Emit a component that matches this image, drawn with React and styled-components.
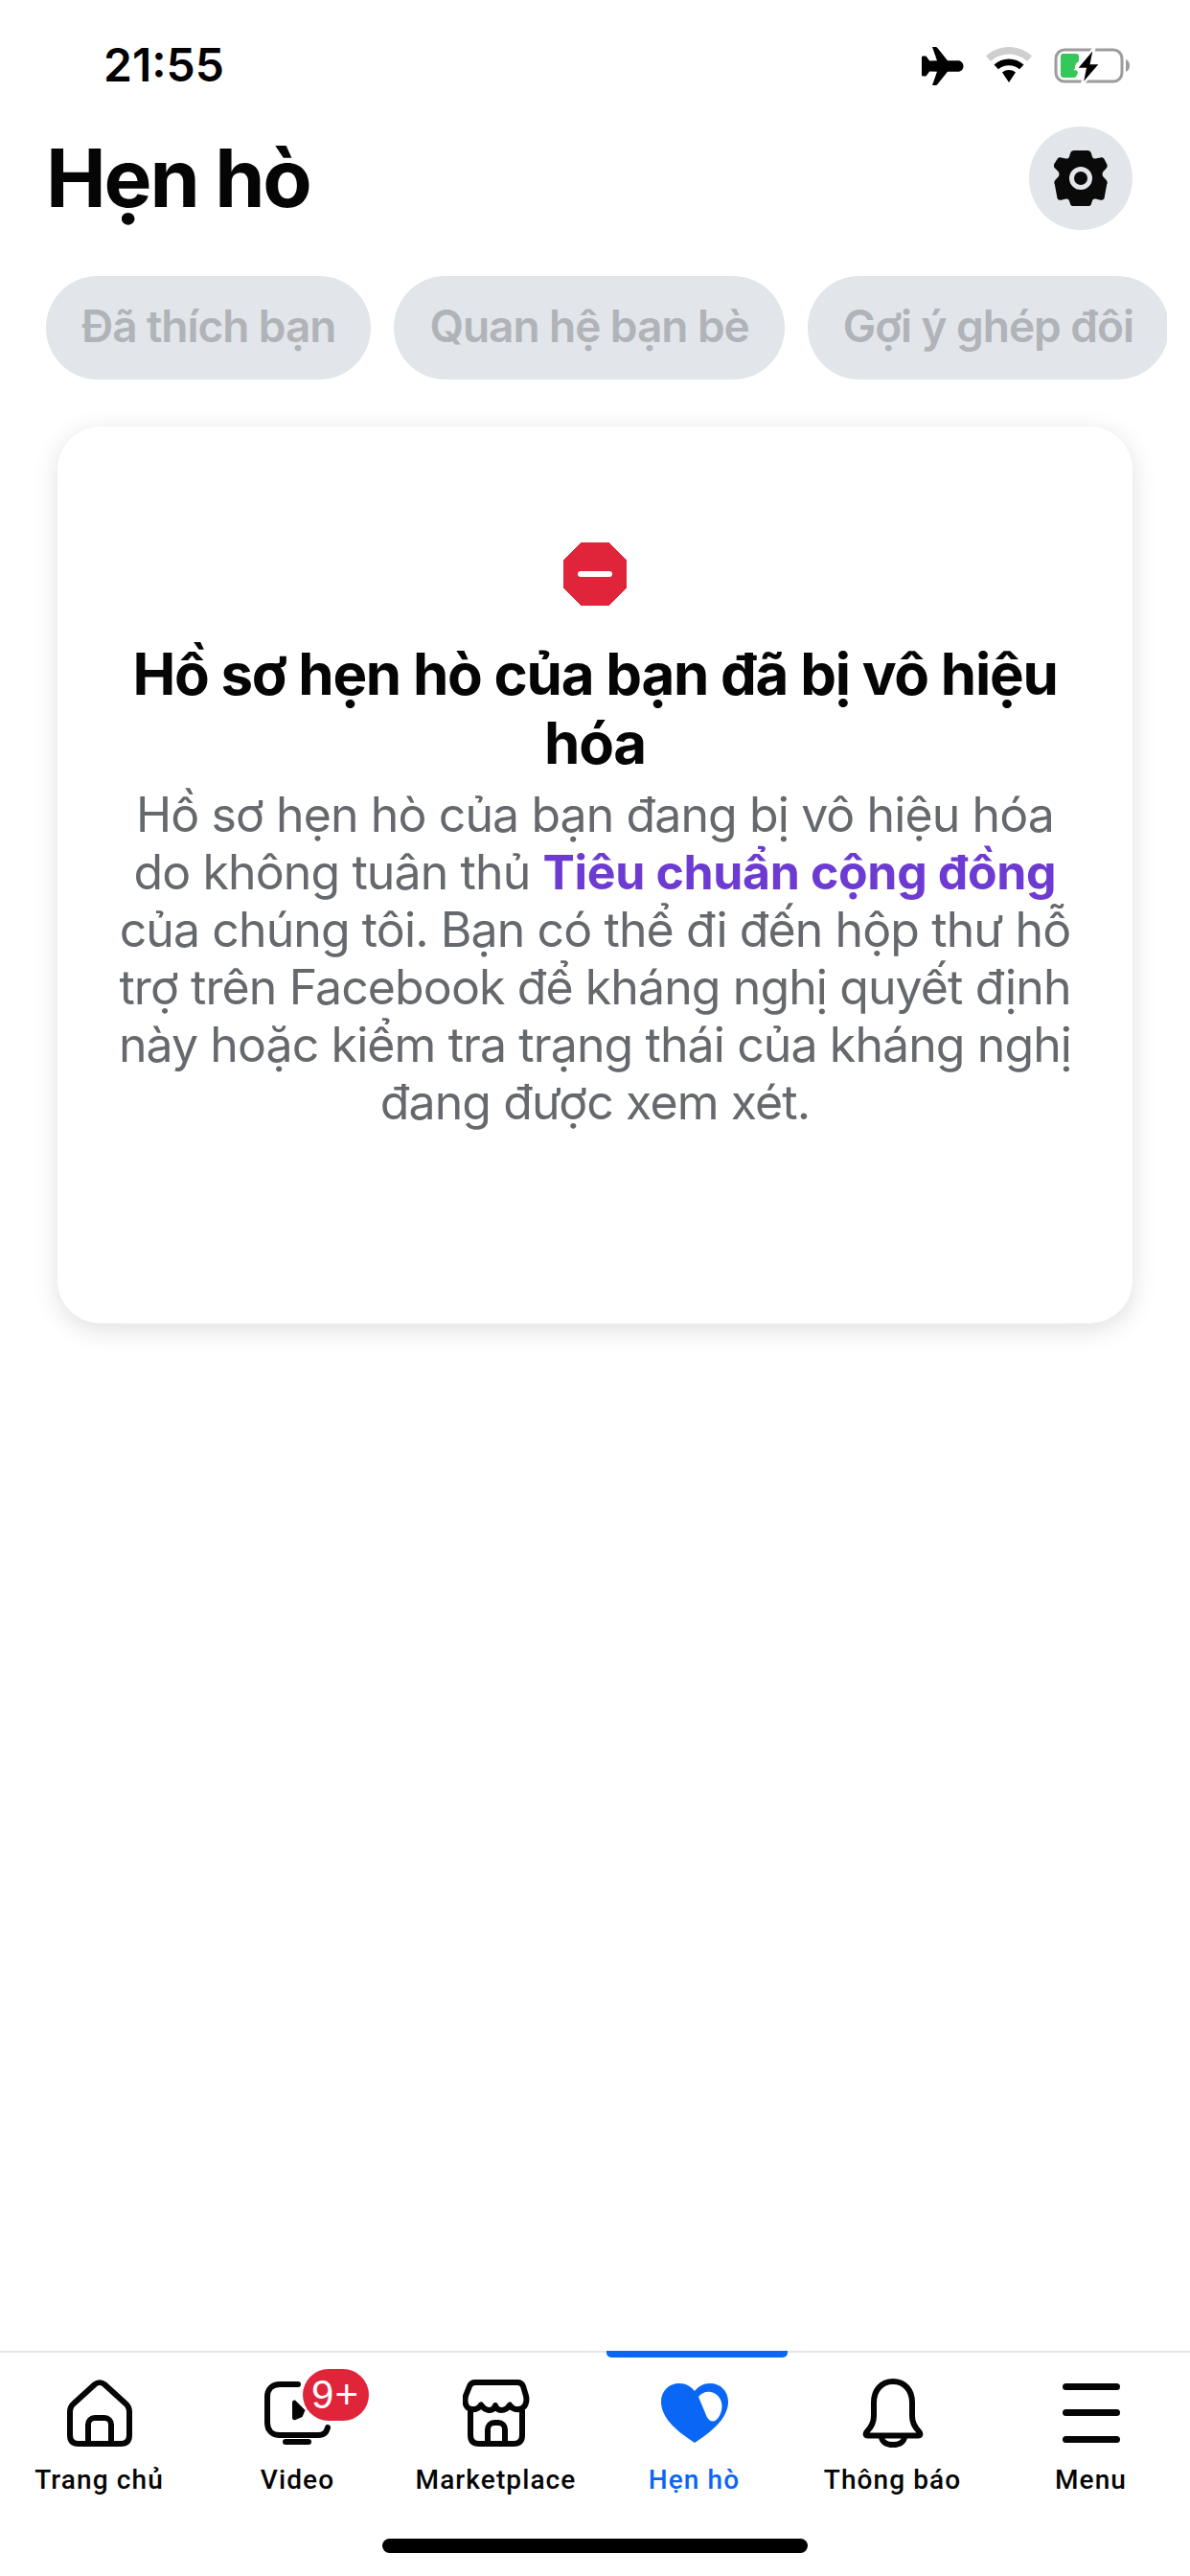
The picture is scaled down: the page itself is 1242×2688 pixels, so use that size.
import React from "react";
import styled, { createGlobalStyle } from "styled-components";

const Global = createGlobalStyle`
  html, body { margin: 0; padding: 0; background: #fff; }
  * { box-sizing: border-box; }
`;
const Page = styled.div`
  width: 1242px; height: 2688px; display: flex; flex-direction: column; background: #fff;
  font-family: Inter, "Liberation Sans", sans-serif; color: #050505; overflow: hidden;
`;
const StatusBar = styled.div`
  height: 132px; flex: none; display: flex; align-items: flex-start; justify-content: space-between;
  padding: 44px 62px 0 108px;
`;
const Clock = styled.div`
  font-size: 48px; font-weight: 600; line-height: 48px; letter-spacing: 0; color: #000;
`;
const StatusIcons = styled.div`
  display: flex; align-items: flex-start; gap: 23px; padding-top: 5px;
`;
const Header = styled.div`
  flex: none; display: flex; align-items: center; justify-content: space-between;
  height: 108px; padding: 0 60px 0 48px;
`;
const Title = styled.h1`
  margin: 0; font-size: 84px; line-height: 108px; font-weight: 700; letter-spacing: -2.2px; color: #050505;
`;
const RoundButton = styled.div`
  width: 108px; height: 108px; border-radius: 50%; background: #e2e5e9;
  display: flex; align-items: center; justify-content: center;
`;
const Chips = styled.div`
  flex: none; display: flex; gap: 24px; margin: 48px 24px 0 48px; height: 108px; overflow: hidden;
`;
const Chip = styled.div`
  flex: none; height: 108px; border-radius: 54px; background: #e2e5e9; color: #b0b3b8;
  padding: 0 37px 4px; display: flex; align-items: center; font-size: 46px; font-weight: 600; letter-spacing: -1.05px; white-space: nowrap;
`;
const Card = styled.div`
  flex: none; margin: 49px 60px 0; height: 936px; border-radius: 45px; background: #fff;
  box-shadow: 0 6px 27px rgba(0,0,0,0.13);
  display: flex; flex-direction: column; align-items: center; padding-top: 121px; text-align: center;
`;
const Heading = styled.h2`
  margin: 35px 0 0; font-size: 60px; line-height: 72px; font-weight: 700; letter-spacing: -1.25px; color: #050505;
`;
const Body = styled.p`
  margin: 9px 0 0; font-size: 50px; line-height: 60px; font-weight: 400; color: #65686c; letter-spacing: -0.9px;
`;
const Link = styled.span`
  color: #6d3bd1; font-weight: 700; letter-spacing: -0.35px;
`;
const Spacer = styled.div`flex: 1;`;
const TabBar = styled.div`
  flex: none; height: 235px; border-top: 2px solid #e6e7e9; display: grid; grid-template-columns: repeat(6, 207px);
  align-items: start; background: #fff; position: relative;
`;
const Tab = styled.div`
  position: relative; display: flex; flex-direction: column; align-items: center; padding-top: 26px;
  color: ${p => p.$active ? "#0a66f5" : "#050505"};
`;
const TabIcon = styled.div`
  flex: none; position: relative; width: 80px; height: 74px; display: flex; align-items: center; justify-content: center;
`;
const TabLabel = styled.div`
  flex: none; margin-top: 16px; font-family: Roboto, Inter, sans-serif; font-size: 28px; line-height: 34px; font-weight: 500; letter-spacing: 1.1px; white-space: nowrap;
`;
const Indicator = styled.div`
  position: absolute; top: -2px; left: 12px; width: 189px; height: 7px; background: #0a66f5; border-radius: 0 0 5px 5px;
`;
const Badge = styled.div`
  position: absolute; left: 45px; top: -9px; width: 69px; height: 54px; border-radius: 27px; background: #e0243a; color: #fff;
  font-family: "Liberation Sans", sans-serif; font-size: 42px; line-height: 54px; text-align: center; letter-spacing: 1px;
`;
const HomeBar = styled.div`
  position: absolute; left: 399px; top: 194px; width: 444px; height: 15px; border-radius: 8px; background: #000;
`;

const Plane = () => (
  <svg width="44" height="40" viewBox="0 0 44 40">
    <path fill="#000" d="M11 0h3.500c.8 0 1.400.4 1.900 1L27 14.200h11c3 0 5.500 2.500 5.500 5.800s-2.500 5.800-5.500 5.800H27L16.400 39c-.5.600-1.100 1-1.900 1H11l5-14.200-7.800-.3L4.500 30.500H1.500L0 30V10l1.500-.5h3L8.200 14.500l7.800-.3z"/>
  </svg>
);
const Wifi = () => (
  <svg width="48" height="37" viewBox="0 0 48 37">
    <path fill="#cfcfcf" d="M0 9.500C6.500 3.500 15 0 24 0s17.500 3.500 24 9.500l-5 5.500C37.800 10.300 31.200 7.500 24 7.500S10.200 10.300 5 15z"/>
    <path fill="#000" d="M8.500 18.500C12.800 14.500 18.200 12.500 24 12.500s11.200 2 15.500 6L35 23.300c-3-2.700-6.800-4-11-4s-8 1.300-11 4z"/>
    <path fill="#000" d="M17 26.500c2-1.700 4.400-2.500 7-2.500s5 .800 7 2.500L24 37z"/>
  </svg>
);
const Battery = () => (
  <svg width="80" height="40" viewBox="0 0 80 40">
    <rect x="2" y="3" width="69" height="33" rx="9" fill="none" stroke="#9c9c9c" strokeWidth="3"/>
    <path fill="#9c9c9c" d="M75 13c2.500 1 4 3.500 4 6.500s-1.500 5.500-4 6.500z"/>
    <path fill="#34c759" d="M9 7h14c2 0 3 1.200 3 3v5c-3 1.500-4 4-4 6s1 3.500 3 5c-.5 3-2 6-4 6H10c-2 0-3-1.500-3-3V10c0-2 1-3 2-3z"/>
    <path fill="#000" stroke="#fff" strokeWidth="2.500" d="M42.500 0L23 23h9.500L29 40l20-23h-10z"/>
  </svg>
);
const Gear = () => (
  <svg width="56" height="58" viewBox="0 0 56 58">
    <path fill="#0a0a0a" d="M21 0h14c2 0 3.200 1 3.800 2.800L40 6.500c.6 1.800 1.800 2.400 3.500 2l5-1.100c1.800-.4 3.200.3 4 1.700l2.700 5.200c.8 1.500.6 3-.5 4.200L51.500 22c-1.200 1.400-1.200 3.600-.4 5l3.600 4c1.100 1.200 1.300 2.700.5 4.200L52.500 50c-.8 1.400-2.200 2.100-4 1.700l-5-1.100c-1.700-.4-2.900.2-3.500 2l-1.200 3.700C38.200 58 37 58 35 58H21c-2 0-3.200 0-3.800-1.700L16 52.600c-.6-1.800-1.800-2.400-3.500-2l-5 1.100c-1.800.4-3.200-.3-4-1.700L.8 35.200c-.8-1.500-.6-3 .5-4.200l3.600-4c.8-1.400.8-3.600-.4-5L.8 18.300c-1.100-1.200-1.300-2.700-.5-4.200L3.500 9.100c.8-1.400 2.200-2.100 4-1.700l5 1.100c1.700.4 2.900-.2 3.500-2l1.200-3.700C17.800 1 19 0 21 0z"/>
    <circle cx="28" cy="29" r="9.500" fill="#0a0a0a" stroke="#e2e5e9" strokeWidth="5"/>
  </svg>
);
const StopSign = () => (
  <svg width="66" height="66" viewBox="0 0 66 66">
    <path fill="#e0243a" d="M19 0h28l19 19v28L47 66H19L0 47V19z" stroke="#e0243a" strokeLinejoin="round"/>
    <rect x="15" y="30" width="36" height="6" rx="3" fill="#fff"/>
  </svg>
);
const HomeIcon = () => (
  <svg width="68" height="70" viewBox="0 0 68 70" fill="none" stroke="currentColor" strokeWidth="6" strokeLinejoin="round">
    <path d="M29 5 L7 25c-3 2.500-4 5-4 9v24c0 6 3 9 9 9h44c6 0 9-3 9-9V34c0-4-1-6.500-4-9L39 5c-3-2.500-7-2.500-10 0z"/>
    <path d="M22 67V47c0-4 3-7 7-7h10c4 0 7 3 7 7v20"/>
  </svg>
);
const VideoIcon = () => (
  <svg width="70" height="66" viewBox="0 0 70 66" fill="none" stroke="currentColor" strokeWidth="6" strokeLinecap="round">
    <path d="M35 3H16C8 3 3 8 3 16v27c0 8 5 13 13 13h40c6 0 9-3 10-8"/>
    <path d="M22 63h24"/>
    <path fill="currentColor" stroke="none" d="M29 22c0-2 2-3 3.500-2l10 10-3 7-7 3c-2 .8-3.500-.5-3.500-2z"/>
  </svg>
);
const StoreIcon = () => (
  <svg width="70" height="70" viewBox="0 0 70 70" fill="none" stroke="currentColor" strokeWidth="6" strokeLinejoin="round">
    <path d="M13 3h44c3 0 5 1.500 6 4l3 10c1.500 7-1 13-7 14-4 .5-8-1-10-4.500C47 30 43 32 40 32s-5-1.500-6-5c-1 3.500-3 5-6 5s-6.500-2-9-5.500C17 30 13 31.500 9 31c-6-1-7.500-7-6-14L7 7c1-2.500 3-4 6-4z"/>
    <path d="M8 32v26c0 6 3 9 9 9h36c6 0 9-3 9-9V32"/>
    <path d="M26 67V52c0-4 3-7 7-7h4c4 0 7 3 7 7v15"/>
  </svg>
);
const HeartIcon = () => (
  <svg width="70" height="62" viewBox="0 0 70 62">
    <path fill="currentColor" d="M35 62C20 52 0 38 0 19 0 8 8 0 19 0c7 0 12 3 16 8 4-5 9-8 16-8 11 0 19 8 19 19 0 19-20 33-35 43z"/>
    <path fill="#fff" d="M39 14c3-4 8-6 13-5 7 1.500 12 8 11.500 16-.5 6-4 14-9 14.500-3 .3-5-1.500-7-5z"/>
  </svg>
);
const BellIcon = () => (
  <svg width="66" height="72" viewBox="0 0 66 72" fill="none" stroke="currentColor" strokeWidth="6" strokeLinejoin="round">
    <path d="M33 3C21 3 13 12 13 25v14c0 6-2 11-7 16-2 2-2 4.500 1 4.500h52c3 0 3-2.500 1-4.500-5-5-7-10-7-16V25C53 12 45 3 33 3z"/>
    <path d="M21 60c0 6 5 9 12 9s12-3 12-9"/>
  </svg>
);
const MenuIcon = () => (
  <svg width="60" height="62" viewBox="0 0 60 62" fill="currentColor">
    <rect x="0" y="0" width="60" height="7" rx="3.500"/>
    <rect x="0" y="27" width="60" height="7" rx="3.500"/>
    <rect x="0" y="55" width="60" height="7" rx="3.500"/>
  </svg>
);

const tabs = [
  { label: "Trang chủ", icon: <HomeIcon /> },
  { label: "Video", icon: <VideoIcon />, badge: "9+" },
  { label: "Marketplace", icon: <StoreIcon /> },
  { label: "Hẹn hò", icon: <HeartIcon />, active: true },
  { label: "Thông báo", icon: <BellIcon /> },
  { label: "Menu", icon: <MenuIcon /> },
];

export default function App() {
  return (
    <Page>
      <Global />
      <StatusBar>
        <Clock>21:55</Clock>
        <StatusIcons><Plane /><Wifi /><Battery /></StatusIcons>
      </StatusBar>
      <Header>
        <Title>Hẹn hò</Title>
        <RoundButton><Gear /></RoundButton>
      </Header>
      <Chips>
        <Chip>Đã thích bạn</Chip>
        <Chip>Quan hệ bạn bè</Chip>
        <Chip>Gợi ý ghép đôi</Chip>
      </Chips>
      <Card>
        <StopSign />
        <Heading>Hồ sơ hẹn hò của bạn đã bị vô hiệu<br />hóa</Heading>
        <Body>
          Hồ sơ hẹn hò của bạn đang bị vô hiệu hóa<br />
          do không tuân thủ <Link>Tiêu chuẩn cộng đồng</Link><br />
          của chúng tôi. Bạn có thể đi đến hộp thư hỗ<br />
          trợ trên Facebook để kháng nghị quyết định<br />
          này hoặc kiểm tra trạng thái của kháng nghị<br />
          đang được xem xét.
        </Body>
      </Card>
      <Spacer />
      <TabBar>
        {tabs.map(t => (
          <Tab key={t.label} $active={t.active}>
            {t.active && <Indicator />}
            <TabIcon>
              {t.icon}
              {t.badge && <Badge>{t.badge}</Badge>}
            </TabIcon>
            <TabLabel>{t.label}</TabLabel>
          </Tab>
        ))}
        <HomeBar />
      </TabBar>
    </Page>
  );
}
